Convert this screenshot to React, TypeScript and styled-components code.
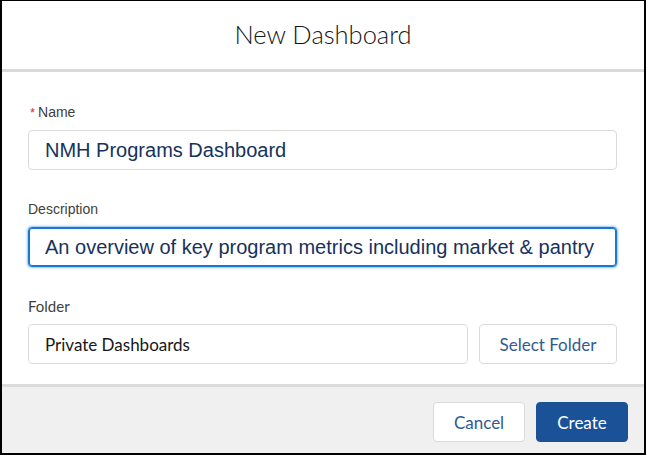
import React from "react";
import styled, { createGlobalStyle } from "styled-components";

const Global = createGlobalStyle`
  html, body { margin: 0; padding: 0; background: #ffffff; }
  * { box-sizing: border-box; }
`;

const Frame = styled.div`
  width: 646px;
  height: 455px;
  border-style: solid;
  border-color: #000000;
  border-width: 1px 2px 2px 2px;
  display: flex;
  flex-direction: column;
  background: #ffffff;
`;

const Header = styled.header`
  height: 71px;
  flex-shrink: 0;
  display: flex;
  align-items: center;
  justify-content: center;
  border-bottom: 3px solid #d9d9d9;
`;

const Title = styled.h1`
  margin: 0 0 2px;
  font-family: Lato, "Open Sans", sans-serif;
  font-weight: 300;
  font-size: 25.5px;
  color: #16161a;
`;

const Body = styled.div`
  flex: 1;
  padding: 30px 27px 20px 26px;
  display: flex;
  flex-direction: column;
  gap: 29px;
`;

const Field = styled.div`
  display: flex;
  flex-direction: column;
  gap: 8px;
`;

const Label = styled.label<{ $lato?: boolean }>`
  height: 20px;
  line-height: 20px;
  font-family: ${(p) => (p.$lato ? 'Lato, "Liberation Sans", sans-serif' : '"Liberation Sans", Arial, sans-serif')};
  font-size: ${(p) => (p.$lato ? "15px" : "14px")};
  color: #3e3e3c;
`;

const Req = styled.abbr`
  color: #c23934;
  text-decoration: none;
  margin-right: 3px;
  margin-left: 2px;
  font-size: 13px;
`;

const Box = styled.div<{ $focus?: boolean; $small?: boolean }>`
  height: 40px;
  flex: ${(p) => (p.$small ? "1 1 auto" : "none")};
  display: flex;
  align-items: center;
  padding: 0 16px;
  border-radius: 4px;
  border: 1px solid ${(p) => (p.$focus ? "#1b76d3" : "#dddbda")};
  box-shadow: ${(p) => (p.$focus ? "0 0 3px #1589ee, inset 0 0 0 1px #1b76d3" : "none")};
  overflow: hidden;
  white-space: nowrap;
  font-family: ${(p) => (p.$small ? 'Lato, "Liberation Sans", sans-serif' : '"Liberation Sans", Arial, sans-serif')};
  font-size: ${(p) => (p.$small ? "17px" : "20px")};
  color: ${(p) => (p.$small ? "#16161a" : "#16325c")};
  background: #ffffff;
`;

const Row = styled.div`
  display: flex;
  gap: 11px;
`;

const Button = styled.button<{ $brand?: boolean; $w: number }>`
  height: 40px;
  width: ${(p) => p.$w}px;
  flex-shrink: 0;
  border-radius: 4px;
  border: 1px solid ${(p) => (p.$brand ? "#1b5297" : "#dddbda")};
  background: ${(p) => (p.$brand ? "#1b5297" : "#ffffff")};
  color: ${(p) => (p.$brand ? "#ffffff" : "#2f5b8f")};
  font-family: Lato, "Liberation Sans", sans-serif;
  font-size: 17px;
  padding: 0;
  cursor: pointer;
`;

const Footer = styled.footer`
  height: 69px;
  flex-shrink: 0;
  border-top: 3px solid #dcdcdc;
  background: #f0f0f0;
  display: flex;
  justify-content: flex-end;
  align-items: flex-start;
  gap: 11px;
  padding: 15px 16px 0 0;
`;

export default function App() {
  return (
    <>
      <Global />
      <Frame>
        <Header>
          <Title>New Dashboard</Title>
        </Header>
        <Body>
          <Field>
            <Label>
              <Req title="required">*</Req>Name
            </Label>
            <Box>NMH Programs Dashboard</Box>
          </Field>
          <Field>
            <Label>Description</Label>
            <Box $focus>An overview of key program metrics including market &amp; pantry</Box>
          </Field>
          <Field>
            <Label $lato>Folder</Label>
            <Row>
              <Box $small>Private Dashboards</Box>
              <Button $w={138}>Select Folder</Button>
            </Row>
          </Field>
        </Body>
        <Footer>
          <Button $w={92}>Cancel</Button>
          <Button $brand $w={92}>Create</Button>
        </Footer>
      </Frame>
    </>
  );
}
